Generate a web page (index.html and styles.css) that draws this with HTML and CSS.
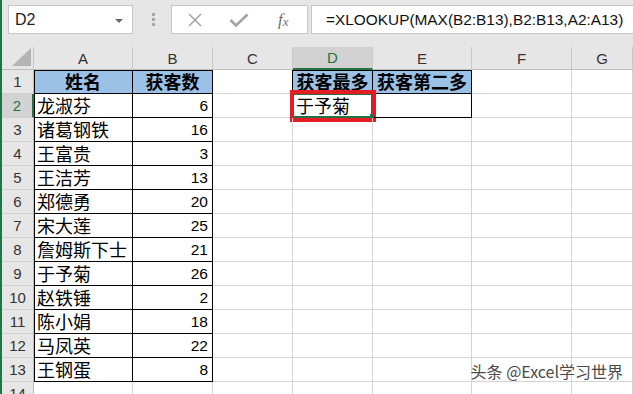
FILE: index.html
```html
<!DOCTYPE html>
<html lang="zh-CN">
<head>
<meta charset="utf-8">
<title>XLOOKUP</title>
<link rel="stylesheet" href="styles.css">
</head>
<body>
<div class="app">
  <div class="fbar">
    <div class="namebox">D2<span class="drop"></span></div>
    <div class="grip"><i></i><i></i><i></i></div>
    <div class="btns">
      <svg class="x" width="16" height="14" viewBox="0 0 16 14"><path d="M2 1 L14 13 M14 1 L2 13" stroke="#9c9c9c" stroke-width="1.4" fill="none"/></svg>
      <svg class="ok" width="20" height="14" viewBox="0 0 20 14"><path d="M1.5 7 L7 12.5 L18.5 1.5" stroke="#a3a3a3" stroke-width="2.6" fill="none"/></svg>
      <span class="fx">f<sub>x</sub></span>
    </div>
    <div class="formula">=XLOOKUP(MAX(B2:B13),B2:B13,A2:A13)</div>
  </div>

  <div class="sheet">
    <div class="r top">
      <div class="ch corner"><svg width="19" height="18" viewBox="0 0 19 18"><polygon points="19,0 19,18 0,18" fill="#b4b4b4"/></svg></div>
      <div class="ch">A</div><div class="ch">B</div><div class="ch">C</div><div class="ch on">D</div><div class="ch">E</div><div class="ch">F</div><div class="ch">G</div>
    </div>
    <div class="r">
      <div class="h">1</div>
      <div class="c b hd tl">姓名</div><div class="c b hd tt">获客数</div><div class="c cr"></div>
      <div class="c b hd tt">获客最多</div><div class="c b hd tt">获客第二多</div><div class="c"></div><div class="c"></div>
    </div>
    <div class="r">
      <div class="h on">2</div>
      <div class="c b bl">龙淑芬</div><div class="c b n">6</div><div class="c cr"></div>
      <div class="c b sel">于予菊<span class="handle"></span></div><div class="c b"></div><div class="c"></div><div class="c"></div>
    </div>
    <div class="r">
      <div class="h">3</div><div class="c b bl">诸葛钢铁</div><div class="c b n">16</div>
      <div class="c"></div><div class="c"></div><div class="c"></div><div class="c"></div><div class="c"></div>
    </div>
    <div class="r">
      <div class="h">4</div><div class="c b bl">王富贵</div><div class="c b n">3</div>
      <div class="c"></div><div class="c"></div><div class="c"></div><div class="c"></div><div class="c"></div>
    </div>
    <div class="r">
      <div class="h">5</div><div class="c b bl">王洁芳</div><div class="c b n">13</div>
      <div class="c"></div><div class="c"></div><div class="c"></div><div class="c"></div><div class="c"></div>
    </div>
    <div class="r">
      <div class="h">6</div><div class="c b bl">郑德勇</div><div class="c b n">20</div>
      <div class="c"></div><div class="c"></div><div class="c"></div><div class="c"></div><div class="c"></div>
    </div>
    <div class="r">
      <div class="h">7</div><div class="c b bl">宋大莲</div><div class="c b n">25</div>
      <div class="c"></div><div class="c"></div><div class="c"></div><div class="c"></div><div class="c"></div>
    </div>
    <div class="r">
      <div class="h">8</div><div class="c b bl">詹姆斯下士</div><div class="c b n">21</div>
      <div class="c"></div><div class="c"></div><div class="c"></div><div class="c"></div><div class="c"></div>
    </div>
    <div class="r">
      <div class="h">9</div><div class="c b bl">于予菊</div><div class="c b n">26</div>
      <div class="c"></div><div class="c"></div><div class="c"></div><div class="c"></div><div class="c"></div>
    </div>
    <div class="r">
      <div class="h">10</div><div class="c b bl">赵铁锤</div><div class="c b n">2</div>
      <div class="c"></div><div class="c"></div><div class="c"></div><div class="c"></div><div class="c"></div>
    </div>
    <div class="r">
      <div class="h">11</div><div class="c b bl">陈小娟</div><div class="c b n">18</div>
      <div class="c"></div><div class="c"></div><div class="c"></div><div class="c"></div><div class="c"></div>
    </div>
    <div class="r">
      <div class="h">12</div><div class="c b bl">马凤英</div><div class="c b n">22</div>
      <div class="c"></div><div class="c"></div><div class="c"></div><div class="c"></div><div class="c"></div>
    </div>
    <div class="r">
      <div class="h">13</div><div class="c b bl">王钢蛋</div><div class="c b n">8</div>
      <div class="c"></div><div class="c"></div><div class="c"></div><div class="c"></div><div class="c"></div>
    </div>
    <div class="r">
      <div class="h">14</div><div class="c"></div><div class="c"></div>
      <div class="c"></div><div class="c"></div><div class="c"></div><div class="c"></div><div class="c"></div>
    </div>
  </div>

  <div class="mark">头条 @Excel学习世界</div>
</div>
</body>
</html>
```

FILE: styles.css
```css
* {
  box-sizing: border-box;
}
html, body {
  margin: 0;
  background: #fff;
}
.app {
  position: relative;
  width: 633px;
  height: 394px;
  overflow: hidden;
  border-left: 2px solid #217346;
  font-family: "Liberation Sans", Arial, sans-serif;
}

/* formula bar */
.fbar {
  display: flex;
  height: 47px;
  padding: 5px 0 0 6px;
  background: #e6e6e6;
}
.namebox {
  position: relative;
  width: 125px;
  height: 29px;
  padding-left: 6px;
  background: #fff;
  border: 1px solid #c6c6c6;
  font-size: 16px;
  line-height: 27px;
  color: #222;
}
.drop {
  position: absolute;
  right: 9px;
  top: 13px;
  border: 4px solid transparent;
  border-top-color: #6a6a6a;
  border-bottom: 0;
}
.grip {
  display: flex;
  flex-direction: column;
  gap: 2px;
  width: 38px;
  padding: 8px 0 0 19px;
}
.grip i {
  width: 3px;
  height: 3px;
  background: #a8a8a8;
}
.btns {
  display: flex;
  align-items: center;
  gap: 26px;
  width: 137px;
  height: 29px;
  padding-left: 15px;
  background: #fff;
  border: 1px solid #c6c6c6;
}
.fx {
  margin-left: 3px;
  font: italic 17px "Liberation Serif", serif;
  color: #707070;
}
.fx sub {
  font-size: 13px;
  vertical-align: -1px;
}
.formula {
  flex: 1;
  height: 29px;
  margin-left: 3px;
  padding-left: 14px;
  background: #fff;
  border: 1px solid #c6c6c6;
  border-right: 0;
  font-size: 15.4px;
  line-height: 27px;
  color: #111;
  white-space: nowrap;
}

/* sheet grid */
.r {
  display: grid;
  grid-template-columns: 32px 99px 80px 80px 80px 99px 100px 61px;
  height: 24px;
}
.r.top {
  height: 23px;
}
.ch {
  display: flex;
  align-items: center;
  justify-content: center;
  background: #e6e6e6;
  border-right: 1px solid #c8c8c8;
  border-bottom: 1px solid #bdbdbd;
  font-size: 15px;
  color: #333;
}
.corner {
  align-items: flex-end;
  justify-content: flex-end;
  padding: 0 2px 3px 0;
}
.ch.on {
  background: #d2d2d2;
  color: #217346;
  border-bottom: 2px solid #217346;
}
.h {
  display: flex;
  align-items: center;
  justify-content: center;
  background: #e6e6e6;
  border-right: 1px solid #bdbdbd;
  border-bottom: 1px solid #d0d0d0;
  font-size: 15px;
  color: #333;
}
.h.on {
  background: #d2d2d2;
  color: #217346;
  border-right: 2px solid #217346;
}
.c {
  position: relative;
  display: flex;
  align-items: center;
  padding: 0 3px;
  border-right: 1px solid #d4d4d4;
  border-bottom: 1px solid #d4d4d4;
  font: 18px/23px "Noto Sans CJK SC", sans-serif;
  color: #000;
  white-space: nowrap;
}
.c.b {
  border-color: #000;
}
.c.cr {
  border-right-color: #000;
}
.bl {
  box-shadow: inset 1px 0 #000;
}
.tl {
  box-shadow: inset 1px 1px #000;
}
.tt {
  box-shadow: inset 0 1px #000;
}
.hd {
  justify-content: center;
  background: #9bc2e6;
  font-weight: bold;
}
.n {
  justify-content: flex-end;
  padding-right: 4px;
  font: 15.5px/23px "Liberation Sans", Arial, sans-serif;
}

/* active cell with the red mark around it */
.sel::before {
  content: "";
  position: absolute;
  inset: -1px -1px -1px -1px;
  border: 2px solid #217346;
}
.sel::after {
  content: "";
  position: absolute;
  inset: -4px -4px -5px -3px;
  border: 4px solid #e51c23;
}
.handle {
  position: absolute;
  right: -2px;
  bottom: -1px;
  width: 4px;
  height: 4px;
  background: #217346;
  z-index: 1;
}

.mark {
  position: absolute;
  right: 10px;
  bottom: 11px;
  font: 16px "Noto Sans CJK SC", sans-serif;
  color: #4a4a4a;
  text-shadow: 0 0 2px #fff, 0 0 2px #fff;
}
```
